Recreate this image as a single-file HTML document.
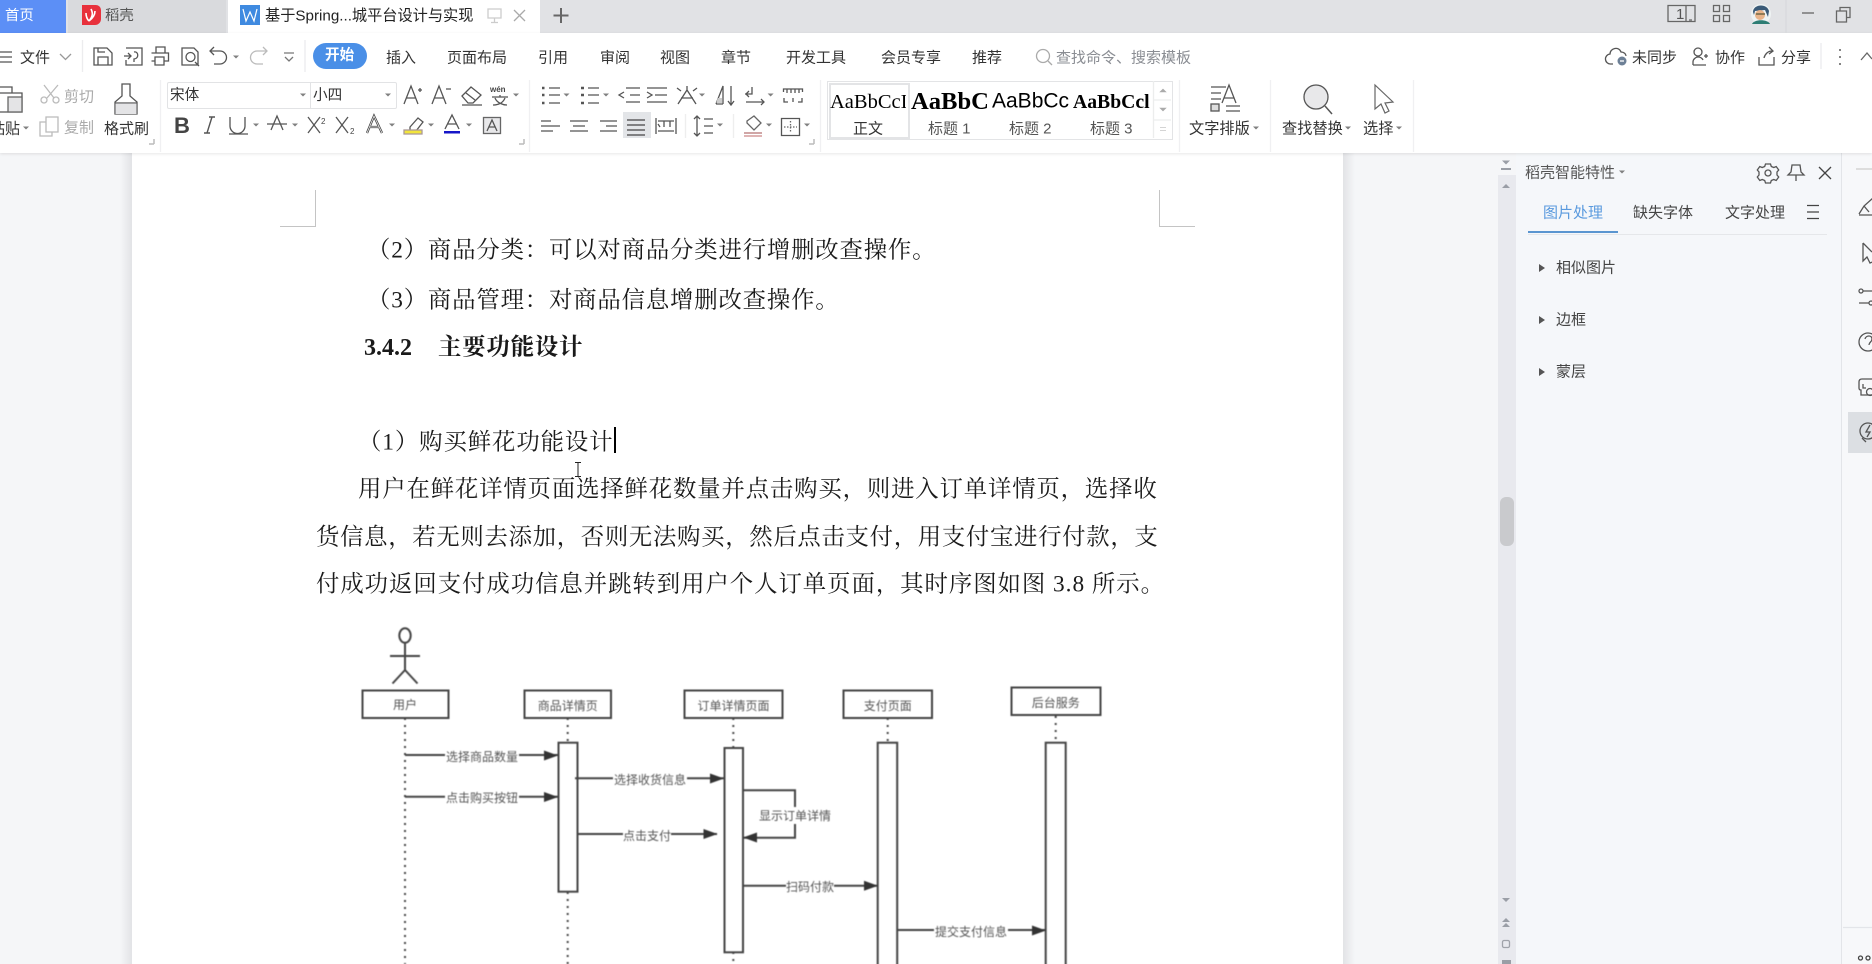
<!DOCTYPE html>
<html lang="zh"><head><meta charset="utf-8"><title>WPS</title>
<style>
html,body{margin:0;padding:0;width:1872px;height:964px;overflow:hidden;background:#f5f6f8}
body{position:relative;font-family:"Liberation Sans","Noto Sans CJK SC",sans-serif;color:#333;font-size:15px}
.b{position:absolute}
.t{position:absolute;white-space:nowrap;line-height:1;transform:translateY(-50%)}
.g{color:#aaa}.s{color:#555}
.d{position:absolute;white-space:nowrap;line-height:1;transform:translateY(-50%);font-family:"Liberation Serif","Noto Serif CJK SC",serif;font-size:23.4px;color:#1a1a1a}
svg{position:absolute;left:0;top:0}
.st{font-family:"Liberation Serif",serif;color:#000}
</style></head><body>
<!-- tab bar -->
<div class="b" style="left:0;top:0;width:1872px;height:33px;background:#e1e2e5"></div>
<div class="b" style="left:0;top:0;width:66px;height:33px;background:#5c8ff6"></div>
<div class="b" style="left:68px;top:0;width:158px;height:33px;background:#d9dadd"></div>
<div class="b" style="left:228px;top:0;width:312px;height:33px;background:#fff"></div>
<div class="t" style="left:5px;top:16px;color:#fff;font-size:14.4px">首页</div>
<div class="t s" style="left:105px;top:16px;font-size:14.4px">稻壳</div>
<div class="t" style="left:265px;top:16px;font-size:15.2px;color:#222">基于Spring...城平台设计与实现</div>
<!-- ribbon -->
<div class="b" style="left:0;top:33px;width:1872px;height:120px;background:#fff;box-shadow:0 1px 3px rgba(0,0,0,.1);z-index:3"></div>
<!-- canvas and page -->
<div class="b" style="left:120px;top:153px;width:12px;height:811px;background:linear-gradient(90deg,#f5f6f8,#e2e3e6)"></div>
<div class="b" style="left:132px;top:153px;width:1211px;height:811px;background:#fff"></div>
<div class="b" style="left:1343px;top:153px;width:12px;height:811px;background:linear-gradient(270deg,#f5f6f8,#e2e3e6)"></div>
<!-- scrollbar, panel -->
<div class="b" style="left:1498px;top:175px;width:18px;height:789px;background:#e8e9ee"></div>
<div class="b" style="left:1500px;top:497px;width:14px;height:49px;background:#c9cacd;border-radius:6px"></div>
<div class="b" style="left:1516px;top:153px;width:325px;height:811px;background:#f5f7fa;border-right:1px solid #e3e5e9"></div>
<div class="b" style="left:1842px;top:153px;width:30px;height:811px;background:#f7f8fa"></div>
<div class="b" style="left:1848px;top:412px;width:24px;height:41px;background:#dcdfe3"></div>
<!-- ribbon text -->
<div style="position:absolute;left:0;top:0;z-index:5;width:1872px;height:153px">
<div class="b" style="left:313px;top:43px;width:54px;height:26px;border-radius:13px;background:#4a8fe7"></div>
<div class="b" style="left:167px;top:82px;width:228px;height:25px;border:1px solid #e2e3e5;border-radius:2px"></div>
<div class="b" style="left:310px;top:82px;width:1px;height:26px;background:#e2e3e5"></div>
<div class="b" style="left:623px;top:112px;width:28px;height:26px;background:#e3e5e8"></div>
<div class="b" style="left:827px;top:81px;width:344px;height:57px;border:1px solid #e3e4e6"></div>
<div class="b" style="left:829px;top:83px;width:77px;height:52px;border:2px solid #e3e4e6;overflow:hidden"></div>
<div class="t" style="left:20px;top:58px">文件</div>
<div class="t" style="left:325px;top:56px;color:#fff;font-weight:700;font-size:14.6px">开始</div>
<div class="t" style="left:386px;top:58px">插入</div>
<div class="t" style="left:447px;top:58px">页面布局</div>
<div class="t" style="left:538px;top:58px">引用</div>
<div class="t" style="left:600px;top:58px">审阅</div>
<div class="t" style="left:660px;top:58px">视图</div>
<div class="t" style="left:721px;top:58px">章节</div>
<div class="t" style="left:786px;top:58px">开发工具</div>
<div class="t" style="left:881px;top:58px">会员专享</div>
<div class="t" style="left:972px;top:58px">推荐</div>
<div class="t" style="left:1056px;top:58px;color:#8a8d93;font-size:15px">查找命令、搜索模板</div>
<div class="t" style="left:1632px;top:58px">未同步</div>
<div class="t" style="left:1715px;top:58px">协作</div>
<div class="t" style="left:1781px;top:58px">分享</div>
<div class="t" style="left:170px;top:96px;font-size:14.6px">宋体</div>
<div class="t" style="left:313px;top:96px;font-size:14.6px">小四</div>
<div class="t g" style="left:64px;top:97px">剪切</div>
<div class="t g" style="left:64px;top:128px">复制</div>
<div class="t" style="left:-10px;top:129px">粘贴</div>
<div class="t" style="left:104px;top:129px;font-size:15px">格式刷</div>
<div class="b st" style="left:830px;top:88px;width:76px;height:28px;overflow:hidden;font-size:20.5px;line-height:28px;white-space:nowrap">AaBbCcI</div>
<div class="b st" style="left:911px;top:86px;width:79px;height:32px;overflow:hidden;font-size:24.6px;line-height:32px;font-weight:700;white-space:nowrap">AaBbC</div>
<div class="t" style="left:992px;top:101px;font-size:21px;color:#000">AaBbCc</div>
<div class="b st" style="left:1073px;top:90px;width:78px;height:24px;overflow:hidden;font-size:19.7px;line-height:24px;font-weight:700;white-space:nowrap">AaBbCcl</div>
<div class="t" style="left:853px;top:129px">正文</div>
<div class="t s" style="left:928px;top:129px">标题 1</div>
<div class="t s" style="left:1009px;top:129px">标题 2</div>
<div class="t s" style="left:1090px;top:129px">标题 3</div>
<div class="t" style="left:1189px;top:129px;font-size:15.2px">文字排版</div>
<div class="t" style="left:1282px;top:129px;font-size:15.2px">查找替换</div>
<div class="t" style="left:1363px;top:129px;font-size:15.2px">选择</div>
</div>
<!-- panel text -->
<div class="t s" style="left:1525px;top:173px;font-size:15px">稻壳智能特性</div>
<div class="t" style="left:1543px;top:213px;font-size:15px;color:#5a9ade">图片处理</div>
<div class="t" style="left:1633px;top:213px;font-size:15px;color:#444">缺失字体</div>
<div class="t" style="left:1725px;top:213px;font-size:15px;color:#444">文字处理</div>
<div class="b" style="left:1528px;top:234px;width:299px;height:1px;background:#e5e7ea"></div>
<div class="b" style="left:1528px;top:231px;width:90px;height:2px;background:#5a95d0"></div>
<div class="t" style="left:1556px;top:268px;font-size:15px;color:#444">相似图片</div>
<div class="t" style="left:1556px;top:320px;font-size:15px;color:#444">边框</div>
<div class="t" style="left:1556px;top:372px;font-size:15px;color:#444">蒙层</div>
<!-- document text -->
<div class="d" style="left:367px;top:251px;letter-spacing:.82px">（2）商品分类：可以对商品分类进行增删改查操作。</div>
<div class="d" style="left:367px;top:300.500px;letter-spacing:.82px">（3）商品管理：对商品信息增删改查操作。</div>
<div class="d" style="left:364px;top:347.500px;font-weight:700;font-size:24px">3.4.2</div>
<div class="d" style="left:438px;top:347.500px;font-weight:700;font-size:23.4px;letter-spacing:.8px">主要功能设计</div>
<div class="d" style="left:358px;top:442.500px;letter-spacing:.9px">（1）购买鲜花功能设计</div>
<div class="d" style="left:358px;top:489.500px;letter-spacing:.84px">用户在鲜花详情页面选择鲜花数量并点击购买，则进入订单详情页，选择收</div>
<div class="d" style="left:316px;top:537.500px;letter-spacing:.68px">货信息，若无则去添加，否则无法购买，然后点击支付，用支付宝进行付款，支</div>
<div class="d" style="left:316px;top:584.500px;letter-spacing:.95px">付成功返回支付成功信息并跳转到用户个人订单页面，其时序图如图 3.8 所示。</div>
<div class="b" style="left:614px;top:427px;width:2px;height:26px;background:#000"></div>
<!-- vector layer -->
<svg width="1872" height="964" viewBox="0 0 1872 964" style="z-index:6;pointer-events:none" fill="none" stroke="#555" stroke-width="1.3" font-family="'Liberation Sans','Noto Sans CJK SC',sans-serif">
<!-- tabs -->
<path d="M82 5h14a5 5 0 0 1 5 5v9a6 6 0 0 1-6 6H82z" fill="#e8313c" stroke="none"/>
<path d="M91 9c2 4 2 7-2 12M95 11c0 4-2 7-6 10M86 13c0 3 1 6 3 8" stroke="#fff" stroke-width="1.6"/>
<rect x="240" y="5" width="20" height="20" fill="#3f8ae0" stroke="none"/>
<path d="M243 9l3 12 4-9 4 9 3-12" stroke="#fff" stroke-width="1.2"/>
<path d="M488 9h13v9h-13zM494.500 18v4M491 22.500h7" stroke="#ccc"/>
<path d="M514 10l11 11M525 10l-11 11" stroke="#aaa"/>
<path d="M561 8v15M553.500 15.500h15" stroke="#666" stroke-width="2"/>
<!-- window -->
<path d="M1668 5.500h27v16h-27zM1686 6v15M1689 20h3" stroke="#666"/>
<text x="1676" y="19" font-size="15" fill="#555" stroke="none">1</text>
<path d="M1713.500 5.500h6v6h-6zM1723.500 5.500h6v6h-6zM1713.500 15.500h6v6h-6zM1723.500 15.500h6v6h-6z" stroke="#666"/>
<circle cx="1761" cy="14" r="10" fill="#eef3f3" stroke="none"/>
<path d="M1753 12c0-8 14-9 16-1l-1 6-3-7-10 1-1 4z" fill="#3a5a78" stroke="none"/>
<circle cx="1760" cy="15" r="5" fill="#e8b48a" stroke="none"/>
<path d="M1752 24c2-5 16-5 18 0z" fill="#2d7d74" stroke="none"/>
<path d="M1756 14h9" stroke="#553" stroke-width="1.2"/>
<path d="M1802 13h12" stroke="#666"/>
<path d="M1840 11V7.500h10v10h-3.500M1836.500 11h10v11h-10z" stroke="#666"/>
<path d="M1786 0v33" stroke="#d8d9dc"/>
<!-- row 1 -->
<path d="M0 52h12M0 57h12M0 62h12" stroke="#555"/>
<path d="M60 54l5.500 5.500L71 54" stroke="#999"/>
<path d="M82.500 40v32M305 40v32" stroke="#ececee"/>
<path d="M94 48h13l5 5v12H94zM98 65v-8h10v8M98 48v4h7" stroke="#555"/>
<path d="M126 48h16v17h-16v-5M124 56h7M128 53l3 3-3 3M134 52c5-1 5 7 0 7v3" stroke="#555"/>
<path d="M156 53v-6h9v6M151.500 53h17v8h-4M155 61h-3.500M155 57h9v8h-9z" stroke="#555"/>
<path d="M182 48h12l4 4v13h-16zM195 62l4 4" stroke="#555"/><circle cx="190.500" cy="57" r="4.500"/>
<path d="M214 47l-4 4 4 4M210 51h10a6 6 0 0 1 0 13h-6" stroke="#555"/>
<path d="M263 47l4 4-4 4M267 51h-10a6 6 0 0 0 0 13h6" stroke="#bbb"/>
<path d="M284 53h10M285 57l4 4 4-4" stroke="#777"/>
<circle cx="1043" cy="56" r="6.500" stroke="#aaa"/><path d="M1048 61l4 4" stroke="#aaa"/>
<!-- right row1 -->
<path d="M1613 64h-2a5 5 0 0 1-1-10c0-6 9-8 11-2 3 0 5 2 5 4" stroke="#555"/><circle cx="1622" cy="61" r="4.500" fill="#6d8096" stroke="none"/><path d="M1620 61h4" stroke="#fff"/>
<circle cx="1698" cy="52" r="4"/><path d="M1693 65v-3c0-3 3-5 5-5s4 1 5 3M1693 65h13M1704 56h4M1706 54v4" stroke="#555"/>
<path d="M1759 57v8h15v-8M1764 58c1-4 4-7 8-7M1769 47l4 4-4 3" stroke="#555"/>
<path d="M1821 43v26" stroke="#ececee"/>
<path d="M1840 49v2M1840 56v2M1840 63v2" stroke="#666" stroke-width="1.6"/>
<path d="M1861 60l6-7 5 6" stroke="#666"/>
<!-- clipboard area -->
<path d="M-4 87h16v6M-5 93h27v19H-5z" stroke="#555"/><rect x="8" y="97" width="14" height="15" fill="#e4e4e6" stroke="#666"/>
<path d="M44 85l10 13M58 85L47 98" stroke="#bbb"/><circle cx="44" cy="100" r="3" stroke="#bbb"/><circle cx="56" cy="100" r="3" stroke="#bbb"/>
<path d="M46 117h12v15H46zM46 122h-6v14h12v-4" stroke="#bbb"/>
<path d="M122 84h8v12l7 6v12h-22v-12l7-6z" stroke="#555"/><path d="M115 103h22" stroke="#555"/><path d="M115.500 103.500h21V114h-21z" fill="#e4e4e6" stroke="none"/>
<path d="M154 144h-5M154 144v-5" stroke="#bbb" stroke-width="1.5"/>
<path d="M160.500 80v72M529.500 80v72M820.500 80v72M1179.500 80v72M1270.500 80v72M1413.500 80v72" stroke="#f0f0f2"/>
<!-- font -->
<path d="M404 104l7-18 7 18M406.500 98h9M418 90h4M420 88v4" stroke="#555"/>
<path d="M432 104l7-18 7 18M434.500 98h9M446 89h5" stroke="#555"/>
<path d="M462 96l9-9 10 8-8 8h-5zM466 93l9 7M462 105h20" stroke="#555"/>
<text x="490" y="92" font-size="8" fill="#444" stroke="none" font-weight="700">wén</text><path d="M492 97h16M500 95v2M495 98c2 5 8 7 12 7M505 98c-2 5-7 7-12 7" stroke="#555"/>
<text x="174" y="133" font-size="22" font-weight="700" fill="#444" stroke="none">B</text>
<path d="M207 133l5-16M209 117h6M204 133h6" stroke="#555" stroke-width="1.4"/>
<path d="M230 117v9a7.500 7.500 0 0 0 15 0v-9M229 134h19" stroke="#555"/>
<path d="M271 130l6-14 6 14M267 124h20" stroke="#555"/>
<path d="M308 117l12 16M320 117l-12 16M336 117l12 16M348 117l-12 16" stroke="#555"/>
<text x="321" y="124" font-size="8" fill="#444" stroke="none">2</text><text x="350" y="134" font-size="8" fill="#444" stroke="none">2</text>
<path d="M367 133l7-17 8 17M370 127h9" stroke="#444" stroke-width="2.300"/><path d="M367 133l7-17 8 17M370 127h9" stroke="#fff" stroke-width=".7"/>
<path d="M410 127l8-9 5 4-7 9h-6zM404 133h18" stroke="#555"/><rect x="404" y="130" width="18" height="4" fill="#f2e53c" stroke="#a99"/>
<path d="M445 129l7-14 7 14M447.500 124h9" stroke="#555"/><rect x="444" y="131" width="16" height="2.500" fill="#1616c8" stroke="none"/>
<rect x="483.500" y="117.500" width="17" height="16" fill="#e8e8ea" stroke="#666"/><path d="M487 131l5-11 5 11M489 127h6" stroke="#555"/>
<path d="M524 144h-5M524 144v-5" stroke="#bbb" stroke-width="1.500"/>
<!-- lists -->
<g stroke="#555"><path d="M549 88h11M549 95h11M549 103h11M588 88h11M588 95h11M588 103h11"/><path d="M542 88h2.500M542 95h2.500M542 103h2.500M581 88h3M581 95h3M581 103h3" stroke-width="2.400"/>
<path d="M626 88h14M630 95h10M626 102h14M624 92l-5 3 5 3"/>
<path d="M647 88h20M655 95h12M647 102h20M647 92l5 3-5 3"/>
<path d="M678 104l9-14 9 14M681 98h12M677 88l4 3M697 88l-4 3M687 86v4"/>
<path d="M716 104l7-18v18M716 104h7M717 99h6M731 86v19M728 101l3 4 3-4"/><path d="M717.500 98h5v5h-6z" fill="#ccc" stroke="none"/>
<path d="M752 87v7h-7M749 91l-3 3 3 3M746 102h18M761 99l3 3-3 3"/>
<path d="M783.500 92v-3h19v3M787 89v4M791 89v4M795 89v4M799 89v4M784 98v4h4M802 98v4h-4M793 98v4"/>
<path d="M541 121h10M541 126h19M541 131h12M570 121h18M573 126h12M570 131h18M600 121h17M606 126h11M600 131h17"/>
<path d="M627 120h18M627 125h18M627 130h18M627 135h18" stroke="#444"/>
<path d="M656 118v16M676 118v16M658 121h16M660 127l-2-3M658 131h16M664 121v6M670 121v6"/>
<path d="M694 119l3-3 3 3M697 116v20M694 133l3 3 3-3M704 119h9M704 126h9M704 133h9"/>
<path d="M747 121l7-5 7 7-7 7-7-7zM744 133h18" stroke="#666"/><path d="M744 133h18M744 136h18" stroke="#c88"/>
<path d="M781.500 118.500h18v17h-18z" stroke="#555"/><path d="M790.500 121v12M784 127h13" stroke="#666" stroke-dasharray="1.500 1.500"/>
<path d="M814 144h-5M814 144v-5" stroke="#bbb" stroke-width="1.500"/>
<path d="M685.500 114v24M733.500 114v24" stroke="#eee"/></g>
<!-- gallery scroll -->
<path d="M1153.500 81v57M1154 100h17M1154 120h17" stroke="#eceded"/>
<path d="M1160 92l3-3 3 3zM1160 108l3 3 3-3zM1160 127.500h6M1160 130.500h6" fill="#aaa" stroke="#aaa" stroke-width=".6"/>
<!-- 文字排版 -->
<path d="M1211 87h15M1211 93h10M1211 99h10M1222 103l7-18 7 18M1224 98h10M1226 106h14M1226 111h14" stroke="#555"/><rect x="1211" y="104" width="8" height="7" fill="#ddd" stroke="#555"/>
<circle cx="1316" cy="97" r="12" fill="#e8e8ea" stroke="#555"/><path d="M1325 106l7 8" stroke="#555" stroke-width="1.500"/>
<path d="M1375 85v24l6-5 4 9 4-2-4-8 8-1z" stroke="#666" stroke-width="1.200"/>
<!-- carets -->
<path fill="#808080" stroke="none" d="M233 55.500h6l-3 3zM300 93.500h6l-3 3zM385 93.500h6l-3 3zM513 93.500h6l-3 3zM563.500 93.500h6l-3 3zM603 93.500h6l-3 3zM699 93.500h6l-3 3zM767.600 93.500h6l-3 3zM23 126.500h6l-3 3zM253 123.500h6l-3 3zM292 123.500h6l-3 3zM389 123.500h6l-3 3zM428 123.500h6l-3 3zM466 123.500h6l-3 3zM717 123.500h6l-3 3zM766 123.500h6l-3 3zM804 123.500h6l-3 3zM1253 126.500h6l-3 3zM1345 126.500h6l-3 3zM1396 126.500h6l-3 3zM1619 170.500h6l-3 3z"/>
<!-- panel icons -->
<path d="M1765.500 164h5l.8 2.500 2.500 1 2.400-1 2.500 3.500-1.700 2 .0 3 1.700 2-2.500 3.500-2.400-1-2.500 1-.8 2.500h-5l-.8-2.500-2.500-1-2.400 1-2.500-3.500 1.700-2v-3l-1.700-2 2.500-3.500 2.400 1 2.500-1z" stroke="#555"/><circle cx="1768" cy="173" r="3"/>
<path d="M1792 165h8l1 7 3 3h-16l3-3zM1796 175v6" stroke="#555"/>
<path d="M1819 167l12 12M1831 167l-12 12" stroke="#444"/>
<path d="M1807 205.500h12M1807 212h12M1807 218.500h12" stroke="#444"/>
<path d="M1539 264l6 4-6 4z" fill="#555" stroke="none"/><path d="M1539 316l6 4-6 4z" fill="#555" stroke="none"/><path d="M1539 368l6 4-6 4z" fill="#555" stroke="none"/>
<!-- right bar icons -->
<path d="M1856 169h16" stroke="#ddd" stroke-width="2"/>
<path d="M1859 214l5-8 9-8M1859 215h13M1864 206l5 6" stroke="#555"/>
<path d="M1863 243v18l4-4 3 6 2.500-1M1863 243l9 9" stroke="#555"/>
<circle cx="1861" cy="291" r="2" /><path d="M1863 291h9M1859 303h10" stroke="#555"/><circle cx="1871" cy="303" r="2"/>
<circle cx="1868" cy="342" r="9" stroke="#555"/><path d="M1865 339c1-4 7-4 7 0 0 3-3 3-3 6" stroke="#555"/>
<path d="M1872 379h-10q-3 0-3 3v6q0 2 2 2v5h11M1863 384v4h3" stroke="#555"/><circle cx="1870" cy="392" r="3.500"/>
<circle cx="1868" cy="431" r="8" stroke="#555"/><path d="M1870 425l-4 7h4l-3 5M1862 438l4 4" stroke="#555"/>
<path d="M1843 927.500h29" stroke="#e3e5e9"/><circle cx="1860.500" cy="958" r="2" stroke="#444"/><circle cx="1868" cy="958" r="2" stroke="#444"/>
<!-- doc scrollbar icons -->
<path d="M1502 160.500h8l-4 4zM1501 168h10v2h-10zM1502 182h0M1502 188l4-4 4 4zM1502 898h8l-4 4zM1502 922l4-4 4 4zM1502 927l4-4 4 4zM1502 960h9v4h-9z" fill="#9a9ea6" stroke="none"/>
<rect x="1502.500" y="940.500" width="7" height="7" rx="1.500" stroke="#a0a3aa"/>
<!-- page corners -->
<path d="M315.500 190v36.500H280M1159.500 190v36.500H1195" stroke="#c4c4c4" stroke-width="1"/>
<!-- mouse -->
<path d="M575 462.500h6M578 462v14M575 476.500h6" stroke="#222" stroke-width="1"/>
<!-- diagram -->
<g style="filter:blur(.4px)" stroke="#444" stroke-width="2">
<ellipse cx="405" cy="635.500" rx="5.700" ry="7.300"/>
<path d="M405 643v27M390 656h30M405 670l-12.500 13.500M405 670l12.500 13.500"/>
<g stroke-dasharray="2 5" stroke-width="2">
<path d="M405 718v246M567.700 718v25M567.700 892v72M733.300 718v30M733.300 952v12M887.700 718v25M1055.700 716v27"/></g>
<rect x="362.500" y="690.500" width="86" height="27.500"/><rect x="524.500" y="690.500" width="86.500" height="27.500"/><rect x="684.500" y="690.500" width="98" height="27.500"/><rect x="843.500" y="690.500" width="88.500" height="27.500"/><rect x="1011.500" y="687.500" width="89" height="27.500"/>
<rect x="558.500" y="742.700" width="19" height="149" fill="#fff"/><rect x="724.500" y="748" width="18.500" height="204.300" fill="#fff"/><rect x="877.700" y="742.700" width="19.500" height="240"/><rect x="1045.700" y="742.700" width="20" height="240"/>
<path d="M405 755h153M405 796.700h153M575 778.300h149M577 834h140M742.700 790.300H795v47.400h-52M742.700 885.700h135M897.300 930h148"/>
<path fill="#333" stroke="none" d="M558 755.500l-14-5v10zM558 797l-14-5v10zM724 778.500l-14-5v10zM717.500 834l-14-5v10zM743 837.500l14-5v10zM878 885.700l-14-5v10zM1046 930.500l-14-5v10z"/>
<g fill="#fff" stroke="none"><rect x="445" y="748" width="74" height="17"/><rect x="445" y="789" width="74" height="17"/><rect x="613" y="771" width="74" height="17"/><rect x="623" y="826" width="48" height="17"/><rect x="758" y="807" width="74" height="17"/><rect x="786" y="878" width="48" height="17"/><rect x="934" y="922" width="74" height="17"/></g>
<g fill="#555" stroke="none" font-size="12" text-anchor="middle">
<text x="405" y="709">用户</text><text x="567.700" y="710">商品详情页</text><text x="733.500" y="710">订单详情页面</text><text x="887.700" y="710">支付页面</text><text x="1055.700" y="707">后台服务</text>
<text x="482" y="761">选择商品数量</text><text x="482" y="802">点击购买按钮</text><text x="650" y="784">选择收货信息</text><text x="647" y="840">点击支付</text><text x="795" y="820">显示订单详情</text><text x="810" y="891">扫码付款</text><text x="971" y="936">提交支付信息</text></g>
</g>
</svg>
</body></html>
